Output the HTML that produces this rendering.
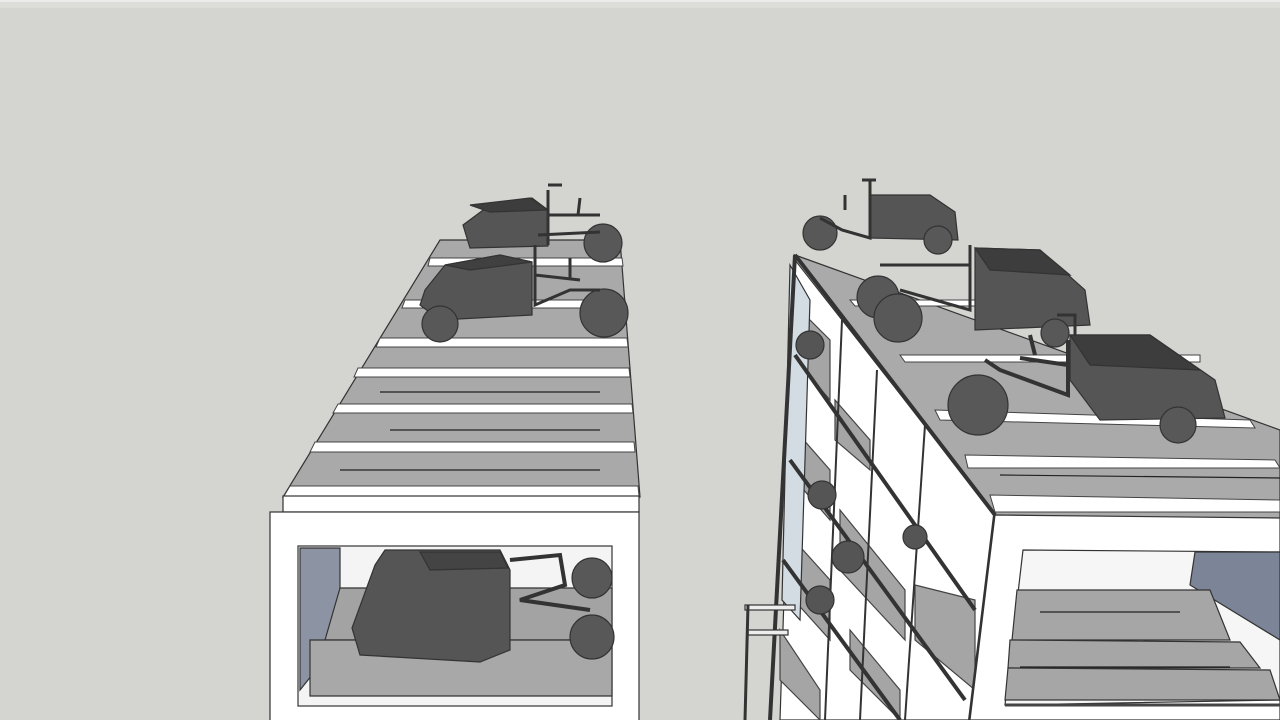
<!DOCTYPE html>
<html><head><style>html,body{margin:0;padding:0;background:#d4d4d0;overflow:hidden}svg{display:block}</style></head>
<body>
<svg width="1280" height="720" viewBox="0 0 1280 720" xmlns="http://www.w3.org/2000/svg">
<rect width="1280" height="720" fill="#d4d4d0"/>
<rect width="1280" height="8" fill="#dcdcd8"/>
<rect y="0" width="1280" height="2" fill="#ececea"/>
<g stroke="#333" stroke-width="1.2">
<!-- LEFT TOWER roof -->
<polygon points="440,240 620,240 640,497 283,497" fill="#a9a9a9"/>
<g stroke="#444" stroke-width="1">
<polygon points="430,258 622,258 623,266 428,266" fill="#fff"/>
<polygon points="405,300 625,300 626,308 402,308" fill="#fff"/>
<polygon points="380,338 627,338 628,347 376,347" fill="#fff"/>
<polygon points="358,368 629,368 630,377 354,377" fill="#fff"/>
<polygon points="338,404 632,404 633,413 333,413" fill="#fff"/>
<polygon points="315,442 634,442 635,452 310,452" fill="#fff"/>
<polygon points="290,486 638,486 639,496 284,496" fill="#fff"/>
</g>
<line x1="380" y1="392" x2="600" y2="392" stroke="#222"/>
<line x1="340" y1="470" x2="600" y2="470" stroke="#222"/>
<line x1="390" y1="430" x2="600" y2="430" stroke="#222"/>
<!-- left front box -->
<rect x="283" y="496" width="356" height="16" fill="#fff"/>
<rect x="270" y="512" width="369" height="210" fill="#fff"/>
<rect x="298" y="546" width="314" height="160" fill="#f4f4f4"/>
<polygon points="300,548 340,548 340,640 300,690" fill="#8c93a3"/>
<polygon points="340,588 612,588 612,640 325,640" fill="#a3a3a3"/>
<polygon points="310,640 612,640 612,696 310,696" fill="#a8a8a8"/>
<!-- left car in box -->
<polygon points="385,550 500,550 510,570 510,650 480,662 360,655 352,628 375,565" fill="#555"/>
<polygon points="420,552 500,552 508,568 430,570" fill="#444"/>
<circle cx="592" cy="578" r="20" fill="#585858"/>
<circle cx="592" cy="637" r="22" fill="#585858"/>
<path d="M510 560 L560 555 L565 585 L520 600 L590 610" fill="none" stroke="#333" stroke-width="4"/>
<!-- left top cars -->
<polygon points="463,225 490,205 532,198 548,210 548,246 470,248" fill="#555"/>
<polygon points="470,205 530,198 548,210 490,212" fill="#3d3d3d"/>
<circle cx="603" cy="243" r="19" fill="#585858"/>
<path d="M548 190 L548 245 M548 185 L562 185 M548 215 L600 215 M580 198 L578 215 M538 235 L600 232" fill="none" stroke="#333" stroke-width="3"/>
<polygon points="425,290 445,265 500,255 532,262 532,315 440,320 420,305" fill="#555"/>
<polygon points="445,265 500,255 532,262 470,270" fill="#404040"/>
<circle cx="440" cy="324" r="18" fill="#585858"/>
<circle cx="604" cy="313" r="24" fill="#585858"/>
<path d="M535 245 L535 305 L570 290 L600 290 M570 258 L570 280 M535 275 L580 280" fill="none" stroke="#333" stroke-width="3"/>
<!-- RIGHT TOWER -->
<polygon points="795,255 1280,430 1280,520 995,515" fill="#aaaaaa"/>
<polygon points="795,260 780,720 975,720 995,515" fill="#fff"/>
<g fill="#a5a5a5" stroke="#444">
<polygon points="800,310 830,340 830,400 800,365"/>
<polygon points="835,400 870,440 870,470 835,440"/>
<polygon points="795,430 830,470 830,520 795,480"/>
<polygon points="840,510 905,590 905,640 840,570"/>
<polygon points="785,530 830,580 830,640 785,590"/>
<polygon points="850,630 900,690 900,720 850,670"/>
<polygon points="780,630 820,690 820,720 780,680"/>
<polygon points="915,585 975,600 975,690 915,640"/>
</g>
<polygon points="790,265 810,300 800,620 782,600" fill="#d2dce2"/>
<g stroke="#333" stroke-width="4" fill="none">
<line x1="795" y1="255" x2="995" y2="515"/>
<line x1="795" y1="355" x2="975" y2="610"/>
<line x1="790" y1="460" x2="965" y2="700"/>
<line x1="783" y1="560" x2="900" y2="720"/>
<line x1="995" y1="515" x2="970" y2="720"/>
<line x1="795" y1="255" x2="770" y2="720"/>
<line x1="842" y1="320" x2="825" y2="720" stroke-width="2"/>
<line x1="877" y1="370" x2="860" y2="720" stroke-width="2"/>
<line x1="925" y1="425" x2="905" y2="720" stroke-width="2"/>
</g>
<!-- right roof slats -->
<g stroke="#444" stroke-width="1" fill="#fff">
<polygon points="850,300 1060,300 1060,306 855,306"/>
<polygon points="900,355 1200,355 1200,362 905,362"/>
<polygon points="935,410 1250,420 1255,428 940,420"/>
<polygon points="965,455 1275,460 1280,468 968,468"/>
<polygon points="990,495 1280,500 1280,512 995,512"/>
</g>
<line x1="1000" y1="475" x2="1280" y2="478" stroke="#222"/>
<!-- right front box -->
<polygon points="995,515 1280,518 1280,720 970,720" fill="#fff"/>
<polygon points="1023,550 1280,552 1280,700 1005,705" fill="#f6f6f6"/>
<polygon points="1195,552 1280,552 1280,640 1190,585" fill="#7b8597"/>
<polygon points="1017,590 1210,590 1230,640 1012,640" fill="#a6a6a6"/>
<polygon points="1010,640 1240,642 1260,668 1008,668" fill="#a6a6a6"/>
<polygon points="1008,668 1270,670 1280,700 1005,700" fill="#a6a6a6"/>
<line x1="1040" y1="612" x2="1180" y2="612" stroke="#222"/>
<line x1="1020" y1="667" x2="1230" y2="667" stroke="#222"/>
<line x1="1005" y1="705" x2="1280" y2="705" stroke="#444" stroke-width="3"/>
<!-- right top cars -->
<polygon points="870,195 930,195 955,212 958,240 870,238" fill="#555"/>
<circle cx="820" cy="233" r="17" fill="#585858"/>
<circle cx="938" cy="240" r="14" fill="#585858"/>
<path d="M870 180 L870 238 L842 230 L820 218 M862 180 L876 180 M845 195 L845 210" fill="none" stroke="#333" stroke-width="3"/>
<polygon points="975,248 1040,250 1085,290 1090,325 975,330" fill="#555"/>
<polygon points="975,248 1040,250 1070,275 990,270" fill="#3d3d3d"/>
<circle cx="878" cy="297" r="21" fill="#585858"/>
<circle cx="898" cy="318" r="24" fill="#585858"/>
<circle cx="1055" cy="333" r="14" fill="#585858"/>
<path d="M970 245 L970 310 L900 290 M880 265 L970 265 M1057 315 L1075 315 L1075 350" fill="none" stroke="#333" stroke-width="3"/>
<polygon points="1070,335 1150,335 1215,380 1225,418 1100,420 1070,380" fill="#555"/>
<polygon points="1070,335 1150,335 1200,370 1090,365" fill="#3d3d3d"/>
<circle cx="978" cy="405" r="30" fill="#585858"/>
<circle cx="1178" cy="425" r="18" fill="#585858"/>
<path d="M1068 340 L1068 395 L1000 370 L985 360 M1020 358 L1068 365 M1030 335 L1035 355" fill="none" stroke="#333" stroke-width="4"/>
<!-- wheels under side -->
<g fill="#555"><circle cx="810" cy="345" r="14"/><circle cx="822" cy="495" r="14"/><circle cx="848" cy="557" r="16"/><circle cx="820" cy="600" r="14"/><circle cx="915" cy="537" r="12"/></g>
<!-- railing bottom-left -->
<rect x="745" y="605" width="50" height="5" fill="#eee"/>
<rect x="748" y="630" width="40" height="5" fill="#eee"/>
<line x1="748" y1="605" x2="745" y2="720" stroke-width="3"/>
</g>
</svg>
</body></html>
